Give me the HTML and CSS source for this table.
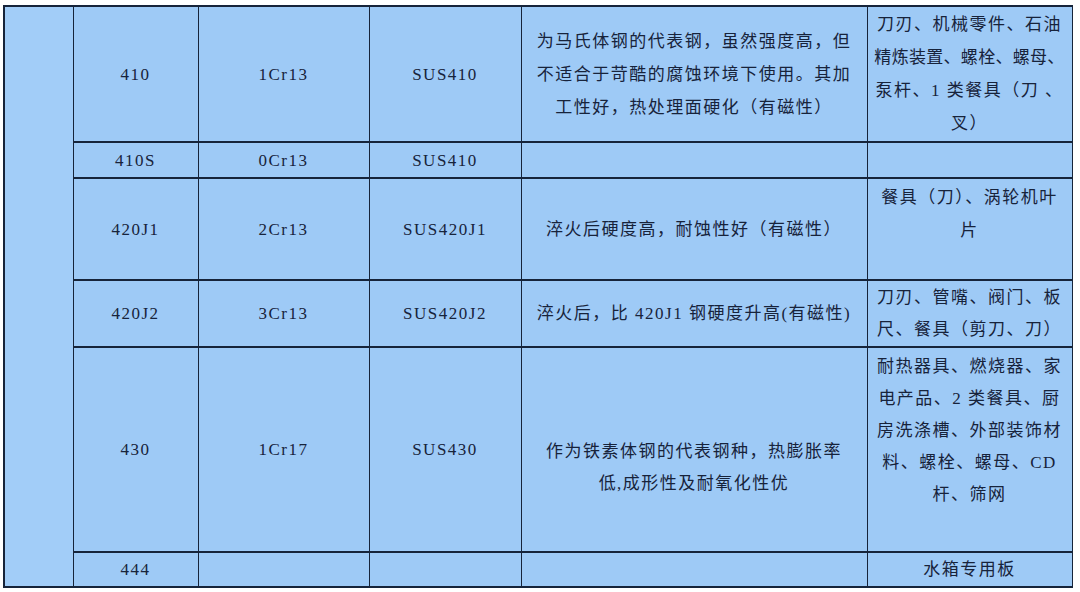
FILE: index.html
```html
<!DOCTYPE html>
<html lang="zh-CN">
<head>
<meta charset="utf-8">
<title>不锈钢牌号对照表</title>
<link rel="stylesheet" href="styles.css">
</head>
<body>
<table class="grade-table">
  <colgroup>
    <col class="c-side">
    <col class="c-aisi">
    <col class="c-gb">
    <col class="c-jis">
    <col class="c-desc">
    <col class="c-use">
  </colgroup>
  <tbody>
    <tr class="r1">
      <td class="side" rowspan="6"></td>
      <td>410</td>
      <td>1Cr13</td>
      <td>SUS410</td>
      <td class="desc">为马氏体钢的代表钢，虽然强度高，但<br>不适合于苛酷的腐蚀环境下使用。其加<br>工性好，热处理面硬化（有磁性）</td>
      <td class="use">刀刃、机械零件、石油<br><span class="tight">精炼装置、螺栓、螺母、</span><br>泵杆、1 类餐具（刀 、<br>叉）</td>
    </tr>
    <tr class="r2">
      <td>410S</td>
      <td>0Cr13</td>
      <td>SUS410</td>
      <td class="desc"></td>
      <td class="use"></td>
    </tr>
    <tr class="r3">
      <td>420J1</td>
      <td>2Cr13</td>
      <td>SUS420J1</td>
      <td class="desc">淬火后硬度高，耐蚀性好（有磁性）</td>
      <td class="use up-15">餐具（刀）、涡轮机叶<br>片</td>
    </tr>
    <tr class="r4">
      <td>420J2</td>
      <td>3Cr13</td>
      <td>SUS420J2</td>
      <td class="desc">淬火后，比 420J1 钢硬度升高(有磁性)</td>
      <td class="use">刀刃、管嘴、阀门、板<br>尺、餐具（剪刀、刀）</td>
    </tr>
    <tr class="r5">
      <td>430</td>
      <td>1Cr17</td>
      <td>SUS430</td>
      <td class="desc down-18">作为铁素体钢的代表钢种，热膨胀率<br>低,成形性及耐氧化性优</td>
      <td class="use up-19">耐热器具、燃烧器、家<br>电产品、2 类餐具、厨<br>房洗涤槽、外部装饰材<br>料、螺栓、螺母、CD<br>杆、筛网</td>
    </tr>
    <tr class="r6">
      <td>444</td>
      <td></td>
      <td></td>
      <td class="desc"></td>
      <td class="use">水箱专用板</td>
    </tr>
  </tbody>
</table>
</body>
</html>
```
FILE: styles.css
```css
html, body {
  margin: 0;
  padding: 0;
  background: #ffffff;
}

body {
  padding: 5px 0 0 3px;
  font-family: "Liberation Serif", "Noto Sans CJK SC", serif;
  color: #17233b;
}

.grade-table {
  border-collapse: collapse;
  table-layout: fixed;
  width: 1068px;
  background: #9ecaf6;
  font-size: 17px;
  letter-spacing: 1.5px;
}

.c-side { width: 69px; }
.c-aisi { width: 125px; }
.c-gb   { width: 171px; }
.c-jis  { width: 152px; }
.c-desc { width: 346px; }
.c-use  { width: 205px; }

.grade-table td {
  border-left: 1px solid #16243a;
  border-right: 1px solid #16243a;
  border-top: 2px solid #16243a;
  border-bottom: 2px solid #16243a;
  text-align: center;
  vertical-align: middle;
  padding: 0 4px;
  line-height: 33px;
  white-space: nowrap;
  overflow: hidden;
}

.grade-table td.side {
  background: #a2cdf8;
  border-left-width: 2px;
}

.grade-table td.use {
  padding: 0 1px;
}

.tight {
  letter-spacing: 0.3px;
}

.r1 { height: 136px; }
.r2 { height: 36px; }
.r3 { height: 102px; }
.r4 { height: 67px; }
.r5 { height: 205px; }
.r6 { height: 34px; }

.r4 td.use { line-height: 32px; }
.r5 td.use { line-height: 32px; }

.grade-table td.up-15 { padding-bottom: 30px; }
.grade-table td.up-19 { padding-bottom: 38px; }
.grade-table td.down-18 { padding-top: 36px; line-height: 32px; }
```
